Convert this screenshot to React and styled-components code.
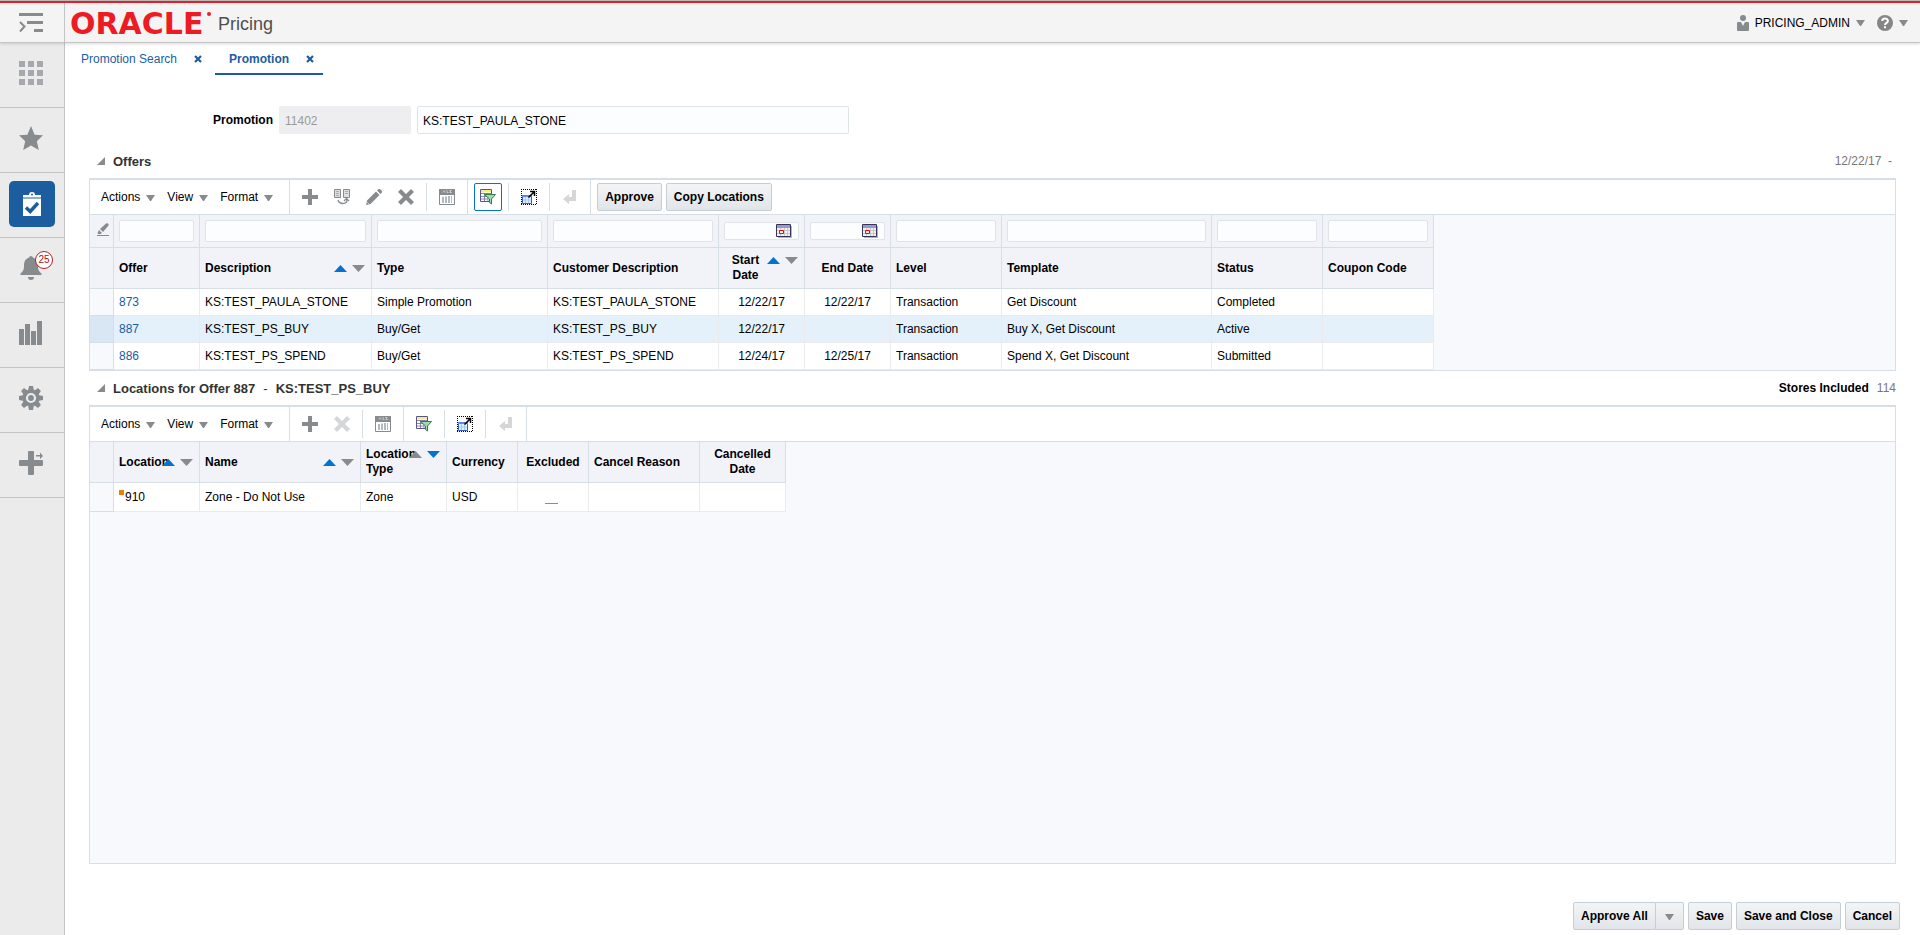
import styled, { createGlobalStyle } from "styled-components"

const colors = {
  line: "#d6dfe6",
  softLine: "#ebebeb",
  grey: "#878b8e",
  blue: "#1b5d9f",
  brightBlue: "#0572ce",
  head: "#f2f3f8",
  field: "#fcfdfe",
  empty: "#f8f9fd",
}

const GlobalStyle = createGlobalStyle`
  * {
    box-sizing: border-box;
  }

  body {
    margin: 0;
    background: #fff;
  }

  body, button, input {
    font-family: "Liberation Sans", Arial, sans-serif;
    font-size: 12px;
    color: #000;
  }

  button {
    padding: 0;
    border: 0;
    background: none;
    cursor: pointer;
  }

  svg {
    display: block;
    flex: none;
  }
`

const StyledPage = styled.div`
  display: flex;
  flex-direction: column;
  min-height: 100vh;
`

const StyledHeader = styled.header`
  display: flex;
  height: 43px;
  border-top: 1px solid #b9b9b9;
  border-bottom: 1px solid #c4c4c4;
  background: #f4f4f4;
  box-shadow: 0 1px 3px rgba(0, 0, 0, 0.15);
  z-index: 1;
`

const StyledHeaderInner = styled.div`
  display: flex;
  flex: 1;
  align-items: center;
  border-top: 2px solid #ed1c24;
`

const StyledMenuToggle = styled.button`
  display: flex;
  align-items: center;
  justify-content: center;
  align-self: stretch;
  width: 65px;
  padding-right: 2px;
  border-right: 1px solid #c4c4c4;
`

const StyledLogo = styled.svg`
  margin-left: 5px;
`

const StyledAppName = styled.h1`
  flex: 1;
  margin: 0;
  padding: 3px 0 0 6px;
  font-size: 18px;
  font-weight: 400;
  color: #4f4f4f;
`

const StyledHeaderButton = styled.button`
  display: flex;
  align-items: center;
  gap: 6px;
  margin-right: 12px;
`

const StyledBody = styled.div`
  display: flex;
  flex: 1;
`

const StyledSidebar = styled.nav`
  width: 65px;
  flex: none;
  border-right: 1px solid #c4c4c4;
  background: #ebebeb;
`

const StyledSideCell = styled.div`
  display: flex;
  align-items: center;
  justify-content: center;
  height: 65px;
  padding-bottom: 2px;
  border-bottom: 1px solid #c4c4c4;
`

const StyledSideButton = styled.button`
  position: relative;
  display: flex;
  align-items: center;
  justify-content: center;
  width: 46px;
  height: 46px;
  padding: ${({ $active }) => ($active ? "0" : "0 2px 2px 0")};
  border-radius: 5px;
  background: ${({ $active }) => ($active ? colors.blue : "transparent")};
`

const StyledBadge = styled.span`
  position: absolute;
  top: 5px;
  right: 2px;
  width: 18px;
  height: 18px;
  border: 1px solid #b8202a;
  border-radius: 9px;
  background: #fff;
  font-size: 10px;
  line-height: 16px;
  text-align: center;
  color: #a3131c;
`

const StyledMain = styled.main`
  display: flex;
  flex-direction: column;
  flex: 1;
  min-width: 0;
`

const StyledTabs = styled.div`
  display: flex;
  gap: 4px;
`

const StyledTab = styled.div`
  display: flex;
  align-items: center;
  height: 32px;
  gap: 17px;
  padding: 2px 9px 0 14px;
  border-bottom: 2px solid ${({ $active }) => ($active ? colors.blue : "transparent")};

  &:first-child {
    margin-left: 2px;
  }
`

const StyledTabLink = styled.a`
  color: ${colors.blue};
  font-weight: ${({ $active }) => ($active ? 700 : 400)};
  text-decoration: none;
`

const StyledForm = styled.form`
  display: flex;
  align-items: center;
  gap: 6px;
  margin: 31px 0 10px;
`

const StyledLabel = styled.label`
  width: 208px;
  font-weight: 700;
  text-align: right;
`

const StyledInput = styled.input`
  width: ${({ $width }) => $width};
  height: 28px;
  padding: 1px 5px 0;
  border: 1px solid #dfe4e7;
  border-radius: 2px;
  background: ${colors.field};

  &:disabled {
    border-color: #eeeef1;
    background: #eeeef1;
    color: #9a9a9a;
  }
`

const StyledSection = styled.section`
  display: flex;
  flex-direction: column;
  flex: ${({ $grow }) => ($grow ? "1" : "none")};
  margin: 0 24px;
`

const StyledSectionHead = styled.div`
  display: flex;
  align-items: center;
  height: 34px;
  gap: 8px;
  padding-left: 8px;
`

const StyledSectionTitle = styled.h2`
  display: flex;
  flex: 1;
  gap: 8px;
  margin: 0;
  font-size: 13px;
  color: #333;
`

const StyledDash = styled.span`
  font-weight: 400;
`

const StyledMuted = styled.span`
  padding-right: ${({ $pad }) => ($pad ? "4px" : "0")};
  color: #777;
`

const StyledPanel = styled.div`
  display: flex;
  flex-direction: column;
  flex: 1;
  border: 1px solid ${colors.line};
  border-top-width: 2px;
  background: ${colors.empty};
`

const StyledToolbar = styled.div`
  display: flex;
  align-items: center;
  height: 35px;
  padding-left: 11px;
  border-bottom: 1px solid ${colors.line};
  background: #fff;
`

const StyledMenus = styled.div`
  display: flex;
  gap: 12px;
  padding-right: 10px;
`

const StyledMenuButton = styled.button`
  display: flex;
  align-items: center;
  gap: 6px;
`

const StyledDivider = styled.span`
  width: 1px;
  height: ${({ $full }) => ($full ? "34px" : "28px")};
  margin: 0 6px;
  background: ${colors.line};
`

const StyledIconButton = styled.button`
  display: flex;
  align-items: center;
  justify-content: center;
  width: 28px;
  height: 28px;
  border: 1px solid ${({ $active }) => ($active ? colors.brightBlue : "transparent")};
  border-radius: 2px;

  & + & {
    margin-left: 4px;
  }
`

const StyledButton = styled.button`
  height: 28px;
  padding: 0 7px;
  border: 1px solid #c4ced7;
  border-radius: 2px;
  background: linear-gradient(#f3f4f5, #e1e5e9);
  font-weight: 700;
`

const StyledButtonGroup = styled.div`
  display: flex;
  gap: 4px;
`

const StyledSplitButton = styled.div`
  display: flex;

  ${StyledButton}:first-child {
    border-radius: 2px 0 0 2px;
  }

  ${StyledButton}:last-child {
    width: 28px;
    padding-left: 9px;
    border-left: 0;
    border-radius: 0 2px 2px 0;
  }
`

const StyledTable = styled.table`
  width: ${({ $width }) => $width}px;
  border-collapse: separate;
  border-spacing: 0;
  table-layout: fixed;
`

const StyledFilterCell = styled.td`
  height: 33px;
  padding: 0 5px;
  border-right: 1px solid ${colors.line};
  border-bottom: 1px solid ${colors.line};
  background: ${colors.head};

  &:first-child {
    padding: 0 0 0 7px;
  }
`

const StyledFilter = styled.div`
  display: flex;
  align-items: center;
  height: ${({ $date }) => ($date ? "18px" : "22px")};
  padding-right: ${({ $date }) => ($date ? "6px" : "0")};
  border: 1px solid #e0e3e8;
  border-radius: 2px;
  background: ${colors.field};

  input {
    flex: 1;
    width: 0;
    height: 100%;
    border: 0;
    background: none;
  }
`

const StyledTh = styled.th`
  height: 41px;
  padding: 0 5px;
  border-right: 1px solid ${colors.line};
  border-bottom: 1px solid ${colors.line};
  background: ${colors.head};
  line-height: 15px;
  text-align: ${({ $align }) => $align || "left"};
`

const StyledThContent = styled.div`
  display: flex;
`

const StyledThText = styled.span`
  flex: 1;
  min-width: 0;
`

const StyledSort = styled.span`
  display: flex;
  align-items: center;
  height: 15px;
  gap: 5px;
  margin-right: 1px;
  z-index: 0;
`

const StyledTr = styled.tr`
  background: ${({ $selected }) => ($selected ? "#e4f0fa" : "#fff")};
`

const StyledTd = styled.td`
  height: ${({ $tall }) => ($tall ? "29px" : "27px")};
  padding: 0 5px;
  border-right: 1px solid ${colors.softLine};
  border-bottom: 1px solid ${colors.softLine};
  text-align: ${({ $align }) => $align || "left"};
  white-space: nowrap;
`

const StyledRowHead = styled.td`
  border-right: 1px solid ${colors.line};
  border-bottom: 1px solid ${colors.line};
  background: ${({ $selected }) => ($selected ? "#d9e7f5" : colors.empty)};
`

const StyledOfferLink = styled.a`
  color: ${colors.blue};
  text-decoration: none;
`

const StyledLocation = styled.span`
  display: flex;
  gap: 1px;

  &::before {
    content: "";
    width: 5px;
    height: 5px;
    background: #ed7d00;
  }
`

const StyledNotExcluded = styled.span`
  display: block;
  width: 13px;
  height: 1px;
  margin: 13px 0 0 22px;
  background: #8c8c8c;
`

const StyledFooter = styled.footer`
  display: flex;
  justify-content: flex-end;
  gap: 4px;
  padding: 38px 20px 5px;
`

/* icons */

const Caret = () => (
  <svg width="9" height="7" viewBox="0 0 9 7">
    <path d="M0 1h9L5 7H4z" fill={colors.grey} />
  </svg>
)

const CloseIcon = () => (
  <svg width="8" height="8" viewBox="0 0 8 8">
    <path d="M1 1l6 6M7 1L1 7" stroke={colors.blue} strokeWidth="2.2" />
  </svg>
)

const SortArrows = ({ sorted }) => (
  <StyledSort>
    <svg width="13" height="7" viewBox="0 0 13 7">
      <path d="M0 7L6.5 0L13 7z" fill={sorted === "desc" ? colors.grey : colors.brightBlue} />
    </svg>
    <svg width="13" height="7" viewBox="0 0 13 7">
      <path d="M0 0h13L6.5 7z" fill={sorted === "desc" ? colors.brightBlue : colors.grey} />
    </svg>
  </StyledSort>
)

const DiscloseIcon = () => (
  <svg width="8" height="8" viewBox="0 0 8 8">
    <path d="M8 0v8H0z" fill={colors.grey} />
  </svg>
)

const ExpandMenuIcon = () => (
  <svg width="24" height="20" viewBox="0 0 24 20" fill={colors.grey}>
    <path d="M0 0h24v3H0zM8 8h16v3H8zM15 16h9v3h-9z" />
    <path d="M1 9l4.500 4.500L1 18.500" fill="none" stroke={colors.grey} strokeWidth="2" />
  </svg>
)

const UserIcon = () => (
  <svg width="12" height="16" viewBox="0 0 12 16" fill={colors.grey}>
    <circle cx="6" cy="3" r="3" />
    <path d="M1 7h3l2 4 2-4h3q1 0 1 1v7q0 1-1 1H1q-1 0-1-1V8q0-1 1-1z" />
  </svg>
)

const HelpIcon = () => (
  <svg width="16" height="16" viewBox="0 0 16 16">
    <circle cx="8" cy="8" r="8" fill="#868686" />
    <path d="M5.200 6q0-2.600 2.800-2.600T10.900 6q0 1.200-1.500 2Q8 8.700 8 10" fill="none" stroke="#fff" strokeWidth="2" />
    <path d="M7 11.300h2v2H7z" fill="#fff" />
  </svg>
)

const GridIcon = () => (
  <svg width="24" height="24" viewBox="0 0 24 24" fill="#a6a8ad">
    <path d="M0 0h6v6H0zM9 0h6v6H9zM18 0h6v6h-6zM0 9h6v6H0zM9 9h6v6H9zM18 9h6v6h-6zM0 18h6v6H0zM9 18h6v6H9zM18 18h6v6h-6z" />
  </svg>
)

const StarIcon = () => (
  <svg width="24" height="24" viewBox="0 0 24 24" fill={colors.grey}>
    <path d="M12 0l3.600 8.800 8.400.500-6.200 6 2 8.700-7.800-4.500L4.200 24l2-8.700L0 9.300l8.400-.5z" />
  </svg>
)

const ClipboardIcon = () => (
  <svg width="18" height="24" viewBox="0 0 18 24">
    <path d="M6 3q0-3 3-3t3 3h6v3H0V3z" fill="#fff" />
    <circle cx="9" cy="2.500" r="1" fill={colors.blue} />
    <path d="M0 5h18v2H0z" fill="#8fb0d2" />
    <path d="M0 7h18v17H0z" fill="#fff" />
    <path d="M3 15.500l4.200 4L15 11" fill="none" stroke={colors.blue} strokeWidth="3.400" />
  </svg>
)

const BellIcon = () => (
  <svg width="24" height="24" viewBox="0 0 24 24" fill={colors.grey}>
    <path d="M12 0q1.500 0 2 1.500C18 3 19 6 19 10c0 4 1 5.500 3.500 7.500V19h-21v-1.500C4 15.500 5 14 5 10c0-4 1-7 5-8.500Q10.500 0 12 0z" />
    <path d="M9 21h6q0 3-3 3t-3-3z" />
  </svg>
)

const BarsIcon = () => (
  <svg width="24" height="24" viewBox="0 0 24 24" fill={colors.grey}>
    <path d="M0 8h5v16H0zM6 3h5v21H6zM12 10h5v14h-5zM18 0h5v24h-5z" />
  </svg>
)

const GearIcon = () => (
  <svg width="24" height="24" viewBox="0 0 24 24">
    <g fill={colors.grey}>
      {[0, 45, 90, 135].map((angle) => (
        <path key={angle} d="M10 0h4l1 5v14l-1 5h-4l-1-5V5z" transform={`rotate(${angle} 12 12)`} />
      ))}
      <circle cx="12" cy="12" r="8.500" />
    </g>
    <circle cx="12" cy="12" r="4" fill="none" stroke="#ebebeb" strokeWidth="2.200" />
  </svg>
)

const AddFlowIcon = () => (
  <svg width="24" height="24" viewBox="0 0 24 24" fill={colors.grey}>
    <path d="M9 1q0-1 1-1h4q1 0 1 1v8h8q1 0 1 1v4q0 1-1 1h-8v8q0 1-1 1h-4q-1 0-1-1v-8H1q-1 0-1-1v-4q0-1 1-1h8z" />
    <path d="M17 4h4V1.500L24 5l-3 3V5.500h-4z" />
  </svg>
)

const PlusIcon = () => (
  <svg width="16" height="16" viewBox="0 0 16 16" fill={colors.grey}>
    <path d="M6 0h4v6h6v4h-6v6H6v-6H0V6h6z" />
  </svg>
)

const DuplicateIcon = () => (
  <svg width="16" height="16" viewBox="0 0 16 16" fill="#dcdedf" stroke={colors.grey}>
    <path d="M.5.5h6v8h-6zM9.500.5h6v8h-6z" />
    <path d="M2 2.500h3M2 4.500h3M11 2.500h3M11 4.500h3M2 6.500h3" strokeWidth=".6" />
    <path d="M4 11q1 3.500 5 3.500t4-4M10 12l2.500-2.500L15 12" fill="none" strokeWidth="1.300" />
  </svg>
)

const PencilIcon = () => (
  <svg width="16" height="16" viewBox="0 0 16 16" fill={colors.grey}>
    <path d="M0 16l1-4.500L10 2.500 13.500 6l-9 9zM11 1.500L12.500 0H14l2 2v1.500L14.500 5z" />
    <path d="M1.500 13.500l1 1" stroke="#fff" />
  </svg>
)

const DeleteIcon = ({ disabled }) => (
  <svg width="16" height="16" viewBox="0 0 16 16">
    <path d="M1.500 1.500l13 13M14.500 1.500l-13 13" stroke={disabled ? "#d5d6d8" : colors.grey} strokeWidth="4.200" />
  </svg>
)

const ExportIcon = () => (
  <svg width="16" height="16" viewBox="0 0 16 16">
    <path d="M.5.5h15v15H.5z" fill="#fff" stroke={colors.grey} />
    <path d="M0 0h16v6H0z" fill={colors.grey} />
    <path d="M4 1.500l2 2M6 1.500l-2 2M8 1v2.500h1.500M12.500 1.500h-2l2 2h-2" fill="none" stroke="#d4d6d7" strokeWidth=".8" />
    <path d="M3 8h2v6H3zM6 7.500h2V14H6zM9 7h2v7H9zM12 7h1v7h-1z" fill="#b5b8ba" />
  </svg>
)

const FilterIcon = () => (
  <svg width="16" height="16" viewBox="0 0 16 16">
    <path d="M.5.5h11v12H.5z" fill="#fff" stroke="#55558c" />
    <path d="M1 1h10v2.500H1z" fill="#f4eb8a" />
    <path d="M1 4.500h10M1 7.500h10M1 10h7M4.500 4v8M8 4v8" stroke="#6c6c9c" strokeWidth=".8" />
    <path d="M4.500 5.500h11L11.500 10v5l-2-1.500V10z" fill="#9ddcb2" stroke="#367c4c" />
  </svg>
)

const DetachIcon = () => (
  <svg width="16" height="16" viewBox="0 0 16 16">
    <path d="M0 .5h16M0 15.500h16M.5 0v16M15.500 0v16" fill="none" stroke="#000" strokeDasharray="1 1" />
    <path d="M1.500 6.500h9v8h-9z" fill="#e4eeff" stroke="#2f64c4" />
    <path d="M1 6h10v2H1z" fill="#5a8ce4" />
    <path d="M2 11h8M4.500 8v6M7.500 8v6" stroke="#9dbcf2" strokeWidth=".8" />
    <path d="M7.500 8.500L13 3M9 2.500h4.500V7" fill="none" stroke="#000" strokeWidth="1.500" />
  </svg>
)

const WrapIcon = () => (
  <svg width="14" height="14" viewBox="0 0 14 14" fill="#d5d6d8">
    <path d="M9 0h4v11H6v3L0 9l6-5v3h3z" />
  </svg>
)

const ClearFilterIcon = () => (
  <svg width="12" height="13" viewBox="0 0 12 13" fill={colors.grey}>
    <path d="M3 6l6-5.500q1-.5 2 0t.5 2L6 9zM2 7l3 3q-1 1.500-4 1L.5 10z" />
    <path d="M0 12h12v1H0z" />
  </svg>
)

const CalendarIcon = () => (
  <svg width="16" height="14" viewBox="0 0 16 14">
    <path d="M2 2h14v12H2z" fill="#b5b1bd" />
    <path d="M.5.5h14v12H.5z" fill="#f3f0ea" stroke="#34345f" />
    <path d="M1 1h13v3H1z" fill="#9a9aca" />
    <path d="M4.500 4v8M8.500 4v8M11.500 4v8M1 6.500h13M1 9.500h13" stroke="#c0bec8" strokeWidth=".8" />
    <path d="M3.500 6.500h4v3h-4z" fill="#fff" stroke="#f00" />
  </svg>
)

/* data */

const offerColumns = [
  { name: "Offer", width: 86 },
  { name: "Description", width: 172, sorted: "asc" },
  { name: "Type", width: 176 },
  { name: "Customer Description", width: 171 },
  { name: "Start Date", width: 86, sorted: "asc", align: "center", date: true },
  { name: "End Date", width: 86, align: "center", date: true },
  { name: "Level", width: 111 },
  { name: "Template", width: 210 },
  { name: "Status", width: 111 },
  { name: "Coupon Code", width: 111 },
]

const offers = [
  ["873", "KS:TEST_PAULA_STONE", "Simple Promotion", "KS:TEST_PAULA_STONE", "12/22/17", "12/22/17", "Transaction", "Get Discount", "Completed", ""],
  ["887", "KS:TEST_PS_BUY", "Buy/Get", "KS:TEST_PS_BUY", "12/22/17", "", "Transaction", "Buy X, Get Discount", "Active", ""],
  ["886", "KS:TEST_PS_SPEND", "Buy/Get", "KS:TEST_PS_SPEND", "12/24/17", "12/25/17", "Transaction", "Spend X, Get Discount", "Submitted", ""],
]

const locationColumns = [
  { name: "Location", width: 86, sorted: "asc" },
  { name: "Name", width: 161, sorted: "asc" },
  { name: "Location Type", width: 86, sorted: "desc" },
  { name: "Currency", width: 71 },
  { name: "Excluded", width: 71, align: "center" },
  { name: "Cancel Reason", width: 111 },
  { name: "Cancelled Date", width: 86, align: "center" },
]

const sideItems = [
  { name: "Applications", icon: <GridIcon /> },
  { name: "Favorites", icon: <StarIcon /> },
  { name: "Tasks", icon: <ClipboardIcon />, active: true },
  { name: "Notifications", icon: <BellIcon />, count: 25 },
  { name: "Reports", icon: <BarsIcon /> },
  { name: "Settings", icon: <GearIcon /> },
  { name: "Application Navigator", icon: <AddFlowIcon /> },
]

const ROW_HEAD = 24

const tableWidth = (columns) => columns.reduce((sum, column) => sum + column.width, ROW_HEAD)

function Columns({ columns }) {
  return (
    <colgroup>
      <col width={ROW_HEAD} />
      {columns.map((column) => (
        <col key={column.name} width={column.width} />
      ))}
    </colgroup>
  )
}

function HeadRow({ columns }) {
  return (
    <tr>
      <StyledTh as="td" />
      {columns.map((column) => (
        <StyledTh key={column.name} scope="col" $align={column.align}>
          <StyledThContent>
            <StyledThText>{column.name}</StyledThText>
            {column.sorted && <SortArrows sorted={column.sorted} />}
          </StyledThContent>
        </StyledTh>
      ))}
    </tr>
  )
}

function Menus() {
  return (
    <StyledMenus>
      {["Actions", "View", "Format"].map((name) => (
        <StyledMenuButton key={name}>
          {name}
          <Caret />
        </StyledMenuButton>
      ))}
    </StyledMenus>
  )
}

function ViewTools({ filtering }) {
  return (
    <>
      <StyledDivider />
      <StyledIconButton aria-label="Export to Excel"><ExportIcon /></StyledIconButton>
      <StyledDivider $full />
      <StyledIconButton aria-label="Query by Example" $active={filtering}><FilterIcon /></StyledIconButton>
      <StyledDivider />
      <StyledIconButton aria-label="Detach"><DetachIcon /></StyledIconButton>
      <StyledDivider />
      <StyledIconButton aria-label="Wrap" disabled><WrapIcon /></StyledIconButton>
      <StyledDivider $full />
    </>
  )
}

function OffersTable() {
  return (
    <StyledTable $width={tableWidth(offerColumns)}>
      <Columns columns={offerColumns} />
      <thead>
        <tr>
          <StyledFilterCell>
            <button aria-label="Clear filters"><ClearFilterIcon /></button>
          </StyledFilterCell>
          {offerColumns.map((column) => (
            <StyledFilterCell key={column.name}>
              <StyledFilter $date={column.date}>
                <input aria-label={`Filter ${column.name}`} />
                {column.date && (
                  <button aria-label={`Select ${column.name}`}><CalendarIcon /></button>
                )}
              </StyledFilter>
            </StyledFilterCell>
          ))}
        </tr>
        <HeadRow columns={offerColumns} />
      </thead>
      <tbody>
        {offers.map((offer) => {
          const selected = offer[0] === "887"
          return (
            <StyledTr key={offer[0]} $selected={selected}>
              <StyledRowHead $selected={selected} />
              {offer.map((value, i) => (
                <StyledTd key={offerColumns[i].name} $align={offerColumns[i].align}>
                  {i === 0 ? <StyledOfferLink href="#">{value}</StyledOfferLink> : value}
                </StyledTd>
              ))}
            </StyledTr>
          )
        })}
      </tbody>
    </StyledTable>
  )
}

function LocationsTable() {
  return (
    <StyledTable $width={tableWidth(locationColumns)}>
      <Columns columns={locationColumns} />
      <thead>
        <HeadRow columns={locationColumns} />
      </thead>
      <tbody>
        <StyledTr>
          <StyledRowHead />
          <StyledTd $tall><StyledLocation>910</StyledLocation></StyledTd>
          <StyledTd>Zone - Do Not Use</StyledTd>
          <StyledTd>Zone</StyledTd>
          <StyledTd>USD</StyledTd>
          <StyledTd><StyledNotExcluded /></StyledTd>
          <StyledTd />
          <StyledTd />
        </StyledTr>
      </tbody>
    </StyledTable>
  )
}

function App() {
  return (
    <StyledPage>
      <GlobalStyle />
      <StyledHeader>
        <StyledHeaderInner>
          <StyledMenuToggle aria-label="Expand menu"><ExpandMenuIcon /></StyledMenuToggle>
          <StyledLogo width="142" height="36" viewBox="0 0 142 36" fill="#ed1c24">
            <text x="0" y="29" fontFamily="DejaVu Sans" fontWeight="700" fontSize="30">ORACLE</text>
            <circle cx="139" cy="9" r="2" />
          </StyledLogo>
          <StyledAppName>Pricing</StyledAppName>
          <StyledHeaderButton>
            <UserIcon />
            PRICING_ADMIN
            <Caret />
          </StyledHeaderButton>
          <StyledHeaderButton aria-label="Help">
            <HelpIcon />
            <Caret />
          </StyledHeaderButton>
        </StyledHeaderInner>
      </StyledHeader>

      <StyledBody>
        <StyledSidebar>
          {sideItems.map((item) => (
            <StyledSideCell key={item.name}>
              <StyledSideButton aria-label={item.name} $active={item.active}>
                {item.icon}
                {item.count && <StyledBadge>{item.count}</StyledBadge>}
              </StyledSideButton>
            </StyledSideCell>
          ))}
        </StyledSidebar>

        <StyledMain>
          <StyledTabs>
            <StyledTab>
              <StyledTabLink href="#">Promotion Search</StyledTabLink>
              <button aria-label="Close Promotion Search"><CloseIcon /></button>
            </StyledTab>
            <StyledTab $active>
              <StyledTabLink href="#" $active>Promotion</StyledTabLink>
              <button aria-label="Close Promotion"><CloseIcon /></button>
            </StyledTab>
          </StyledTabs>

          <StyledForm>
            <StyledLabel htmlFor="promotion">Promotion</StyledLabel>
            <StyledInput id="promotion" $width="132px" defaultValue="11402" disabled />
            <StyledInput aria-label="Promotion name" $width="432px" defaultValue="KS:TEST_PAULA_STONE" />
          </StyledForm>

          <StyledSection>
            <StyledSectionHead>
              <DiscloseIcon />
              <StyledSectionTitle>Offers</StyledSectionTitle>
              <StyledMuted $pad>12/22/17&nbsp; -</StyledMuted>
            </StyledSectionHead>
            <StyledPanel>
              <StyledToolbar>
                <Menus />
                <StyledDivider $full />
                <StyledIconButton aria-label="Add"><PlusIcon /></StyledIconButton>
                <StyledIconButton aria-label="Create from existing"><DuplicateIcon /></StyledIconButton>
                <StyledIconButton aria-label="Edit"><PencilIcon /></StyledIconButton>
                <StyledIconButton aria-label="Delete"><DeleteIcon /></StyledIconButton>
                <ViewTools filtering />
                <StyledButtonGroup>
                  <StyledButton>Approve</StyledButton>
                  <StyledButton>Copy Locations</StyledButton>
                </StyledButtonGroup>
              </StyledToolbar>
              <OffersTable />
            </StyledPanel>
          </StyledSection>

          <StyledSection $grow>
            <StyledSectionHead>
              <DiscloseIcon />
              <StyledSectionTitle>
                <span>Locations for Offer 887</span>
                <StyledDash>-</StyledDash>
                <span>KS:TEST_PS_BUY</span>
              </StyledSectionTitle>
              <strong>Stores Included</strong>
              <StyledMuted>114</StyledMuted>
            </StyledSectionHead>
            <StyledPanel>
              <StyledToolbar>
                <Menus />
                <StyledDivider $full />
                <StyledIconButton aria-label="Add"><PlusIcon /></StyledIconButton>
                <StyledIconButton aria-label="Delete" disabled><DeleteIcon disabled /></StyledIconButton>
                <ViewTools />
              </StyledToolbar>
              <LocationsTable />
            </StyledPanel>
          </StyledSection>

          <StyledFooter>
            <StyledSplitButton>
              <StyledButton>Approve All</StyledButton>
              <StyledButton aria-label="More approve options"><Caret /></StyledButton>
            </StyledSplitButton>
            <StyledButton>Save</StyledButton>
            <StyledButton>Save and Close</StyledButton>
            <StyledButton>Cancel</StyledButton>
          </StyledFooter>
        </StyledMain>
      </StyledBody>
    </StyledPage>
  )
}

export default App
